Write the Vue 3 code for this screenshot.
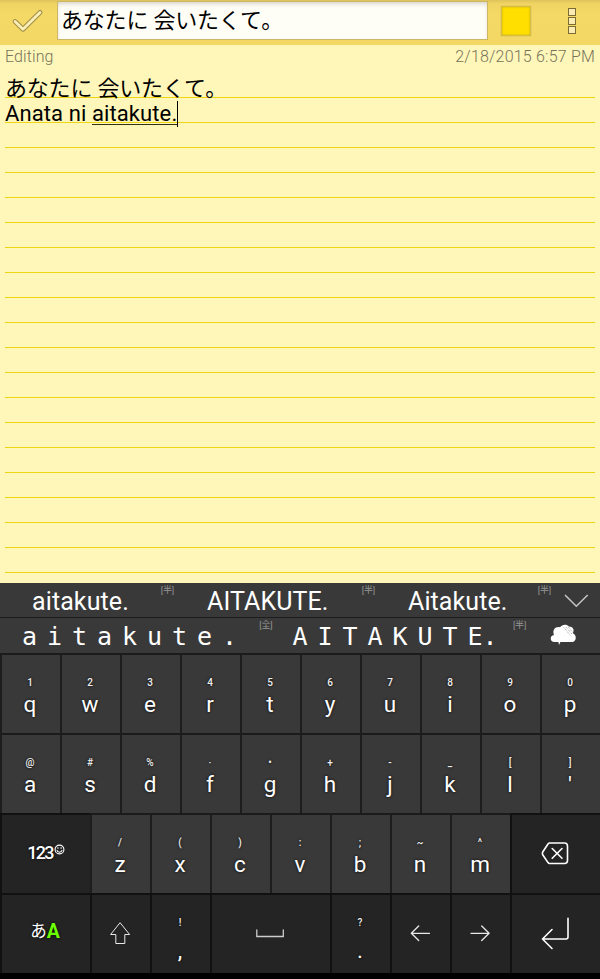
<template>
  <div class="screen">
    <!-- title bar -->
    <header class="title-bar">
      <svg class="check" viewBox="0 0 58 45">
        <path class="check-edge" d="M15.3 21.5 L23.4 29.3 L40.7 12.3" />
        <path class="check-fill" d="M15.3 21.5 L23.4 29.3 L40.7 12.3" />
      </svg>
      <div class="title-input">あなたに 会いたくて。</div>
      <div class="color-box"></div>
      <div class="menu">
        <i v-for="n in 3" :key="n"></i>
      </div>
    </header>

    <!-- note -->
    <main class="note">
      <div class="status">
        <span class="mode">Editing</span>
        <span class="date">2/18/2015 6:57 PM</span>
      </div>
      <div class="paper">
        <p class="line jp">あなたに 会いたくて。</p>
        <p class="line latin">Anata ni <span class="composing">aitakute.</span><span class="caret"></span></p>
      </div>
    </main>

    <!-- keyboard -->
    <section class="keyboard">
      <div class="candidates first">
        <div v-for="c in halfWidth" :key="c.text" class="candidate" :class="c.cls">
          <span>{{ c.text }}</span>
          <sup>[半]</sup>
        </div>
        <svg class="chevron" viewBox="0 0 47 34">
          <path d="M12 12 L23.3 23.3 L34.7 12" />
        </svg>
      </div>
      <div class="candidates second">
        <div class="candidate wide-lower">
          <span>aitakute.</span>
          <sup>[全]</sup>
        </div>
        <div class="candidate wide-upper">
          <span>AITAKUT</span><span class="tight">E.</span>
          <sup>[半]</sup>
        </div>
        <svg class="cloud" viewBox="0 0 73 35">
          <path d="M27.5 24 C22.8 24 22.5 17.5 27 17 C25 11.5 29 8 33 9.3 C35.5 5.8 40 6 42 8.5 C46 8.5 48 12 45.8 15.2 C50 16.5 50 24 45 24 L33.5 24 L32 27 L31.5 24 Z" />
          <path class="hatch" d="M37 9.5 L43.5 17.5 M39 9 L45 16 M41.5 9 L46 14.5" />
        </svg>
      </div>

      <div class="keys">
        <div
          v-for="(key, i) in keys"
          :key="i"
          class="key"
          :class="[key.size, { dark: key.dark, low: key.low }]"
        >
          <template v-if="key.main">
            <span class="hint">{{ key.hint }}</span>
            <span class="main">{{ key.main }}</span>
          </template>

          <div v-else-if="key.icon === 'num'" class="num">
            <span>123</span>
            <svg width="11" height="11" viewBox="0 0 11 11">
              <circle cx="5.5" cy="5.5" r="4.4" />
              <path d="M3.9 3.3 V4.8 M7.1 3.3 V4.8 M2.9 6.2 C3.6 8.9 7.4 8.9 8.1 6.2" />
            </svg>
          </div>

          <div v-else-if="key.icon === 'lang'" class="lang">
            <span>あ</span><b>A</b>
          </div>

          <svg v-else class="icon" :class="key.icon" viewBox="0 0 58 78">
            <path :d="icons[key.icon]" />
          </svg>
        </div>
      </div>
    </section>
  </div>
</template>

<script setup>
const halfWidth = [
  { text: 'aitakute.', cls: 'lower' },
  { text: 'AITAKUTE.', cls: 'upper' },
  { text: 'Aitakute.', cls: 'capital' }
]

/* Zip letters with their long-press hints */
const row = (letters, hints) =>
  [...letters].map((main, i) => ({ main, hint: hints[i], size: 'normal' }))

const keys = [
  ...row('qwertyuiop', '1234567890'),
  ...row("asdfghjkl'", '@#%·•+-_[]'),
  { icon: 'num', size: 'wide', dark: true },
  ...row('zxcvbnm', '/():;~^'),
  { icon: 'del', size: 'wide', dark: true },
  { icon: 'lang', size: 'wide', dark: true },
  { icon: 'shift', size: 'normal', dark: true },
  { main: ',', hint: '!', size: 'normal', dark: true, low: true },
  { icon: 'space', size: 'space', dark: true },
  { main: '.', hint: '?', size: 'normal', dark: true, low: true },
  { icon: 'left', size: 'normal', dark: true },
  { icon: 'right', size: 'normal', dark: true },
  { icon: 'enter', size: 'wide', dark: true }
]

const icons = {
  shift: 'M28.3 28 L37.6 39.5 H32.8 V48.5 H23.8 V39.5 H19 Z',
  space: 'M14.8 35 V41.5 H41.3 V35',
  left: 'M37.5 38.3 H19.5 M26.7 31 L19.3 38.3 L26.7 45.5',
  right: 'M19 38.3 H37 M29.7 31 L37.1 38.3 L29.7 45.5',
  del: 'M22.5 28 H37.5 Q40.5 28 40.5 31 V45.5 Q40.5 48.5 37.5 48.5 H22.5 Q21.7 48.5 21 47.6 L15.7 39.8 Q15 38.3 15.7 37 L21 29 Q21.7 28 22.5 28 Z M25.2 33.5 L35 43.3 M35 33.5 L25.2 43.3',
  enter: 'M41 23.3 V42 Q41 44 39 44 H15.5 M25 34.5 L15.5 44 L25 53.5'
}
</script>

<style>
body {
  margin: 0;
  background: #000;
}
</style>

<style scoped>
.screen {
  width: 600px;
  height: 979px;
  overflow: hidden;
  background: #000;
  font-family: Roboto, "Noto Sans CJK JP", sans-serif;
}

/* title bar */
.title-bar {
  display: flex;
  height: 45px;
  background: linear-gradient(#dec25b, #f1d463 4px, #f4d967 14px, #f4d763);
}

.check {
  width: 57px;
  height: 45px;
  fill: none;
  stroke-linecap: round;
  stroke-linejoin: round;
}

.check-edge {
  stroke: #a28f48;
  stroke-width: 5;
}

.check-fill {
  stroke: #f9efb7;
  stroke-width: 2.8;
}

.title-input {
  box-sizing: border-box;
  width: 431px;
  height: 39px;
  margin-top: 1px;
  padding-left: 3px;
  background: #fffef6;
  border: 1px solid #cdb765;
  box-shadow: inset 0 3px 4px -1px #d5d4cc;
  color: #000;
  font-size: 22px;
  line-height: 37px;
  letter-spacing: -0.2px;
  white-space: pre;
}

.color-box {
  box-sizing: border-box;
  width: 30px;
  height: 30px;
  margin: 6px 0 0 13px;
  background: #ffdf00;
  border: 1px solid #d8bd43;
  box-shadow: inset 0 0 2px #c0a020, 0 0 1px #b9a447;
}

.menu {
  display: flex;
  flex-direction: column;
  gap: 1px;
  margin: 8px 0 0 37px;
}

.menu i {
  box-sizing: border-box;
  width: 8px;
  height: 8px;
  background: #f9ebb1;
  border: 1px solid #7c6c33;
}

/* note */
.note {
  height: 538px;
  background: #fff7b9;
}

.status {
  display: flex;
  justify-content: space-between;
  height: 28px;
  padding: 0 5px;
  color: #77735a;
  font-size: 16px;
  font-weight: 300;
  line-height: 24px;
}

.mode {
  letter-spacing: 0.1px;
}

.date {
  letter-spacing: 0.2px;
}

.paper {
  height: 500px;
  margin: 0 5px;
  background: repeating-linear-gradient(transparent 0 24px, #ecd613 24px 25px);
}

.line {
  height: 25px;
  margin: 0;
  color: #000;
  font-size: 22px;
  line-height: 31px;
  white-space: pre;
}

.jp {
  letter-spacing: -0.2px;
}

.latin {
  letter-spacing: 0.1px;
}

.composing {
  display: inline-block;
  height: 26px;
  border-bottom: 1px solid #33300f;
}

.caret {
  display: inline-block;
  width: 1px;
  height: 26px;
  background: #000;
  vertical-align: top;
  margin-top: 3px;
}

/* candidates */
.keyboard {
  height: 390px;
  background: #393939;
}

.candidates {
  display: flex;
  height: 34px;
  color: #fff;
}

.first {
  border-bottom: 1px solid #1c1c1c;
}

.second {
  height: 35px;
}

.candidate {
  position: relative;
  box-sizing: border-box;
  font-size: 25px;
  line-height: 37px;
  letter-spacing: 0.1px;
  white-space: nowrap;
}

.candidate sup {
  position: absolute;
  top: 1px;
  right: 2px;
  color: #969696;
  font-size: 9px;
  line-height: 12px;
  letter-spacing: -0.2px;
}

.lower {
  width: 176px;
  padding-left: 32px;
}

.upper {
  width: 201px;
  padding-left: 31px;
}

.capital {
  width: 176px;
  padding-left: 31px;
}

.wide-lower,
.wide-upper {
  font-family: "DejaVu Sans Mono", "Noto Sans CJK JP", monospace;
  letter-spacing: 9.95px;
}

.wide-lower {
  width: 274px;
  padding-left: 22px;
}

.wide-upper {
  width: 254px;
  padding-left: 19px;
}

.tight {
  letter-spacing: 0;
}

.second sup {
  right: 1px;
  letter-spacing: -0.2px;
  font-family: Roboto, "Noto Sans CJK JP", sans-serif;
}

.chevron {
  width: 47px;
  height: 34px;
  fill: none;
  stroke: #c4c4c4;
  stroke-width: 1.5;
}

.cloud {
  width: 73px;
  height: 35px;
  fill: #fff;
}

.hatch {
  fill: none;
  stroke: #777;
  stroke-width: 0.7;
  stroke-dasharray: 1 1;
}

/* keys */
.keys {
  display: flex;
  flex-wrap: wrap;
}

.key {
  box-sizing: border-box;
  display: flex;
  flex-direction: column;
  align-items: center;
  height: 80px;
  padding: 19px 2px 0 0;
  background: #393939;
  border-top: 2px solid #1b1b1b;
  border-left: 2px solid #1d1d1d;
  color: #fff;
  text-shadow: 0 0 3px #000;
}

.normal {
  width: 60px;
}

.wide {
  width: 90px;
}

.space {
  width: 120px;
}

.dark {
  background: #242424;
  border-color: #111;
}

.hint {
  height: 16px;
  color: #f0f0f0;
  font-size: 10px;
  font-weight: 500;
  line-height: 17px;
}

.main {
  font-size: 22.5px;
  line-height: 29px;
}

.low .main {
  margin-top: 6px;
}

.num,
.lang {
  display: flex;
  margin-top: -20px;
}

.num {
  padding: 28px 0 0 2px;
  font-size: 18px;
  font-weight: 500;
  line-height: 21px;
  letter-spacing: -1.8px;
}

.num svg {
  margin: 2px 0 0 1px;
  fill: none;
  stroke: #fff;
  stroke-width: 1.1;
}

.lang {
  padding-top: 26px;
  font-size: 16.5px;
  line-height: 24px;
}

.lang b {
  color: #6cff00;
  font-size: 19.5px;
}

.icon {
  flex: none;
  width: 58px;
  height: 78px;
  margin: -19px -2px 0 0;
  fill: none;
  stroke: #e8e8e8;
  stroke-width: 1.3;
  stroke-linecap: round;
  stroke-linejoin: round;
}

.shift {
  stroke-width: 1;
  stroke-linejoin: miter;
}

.space path {
  stroke: #ccc;
  stroke-linejoin: miter;
}

.del,
.enter {
  stroke: #fff;
  stroke-width: 1.6;
}
</style>
